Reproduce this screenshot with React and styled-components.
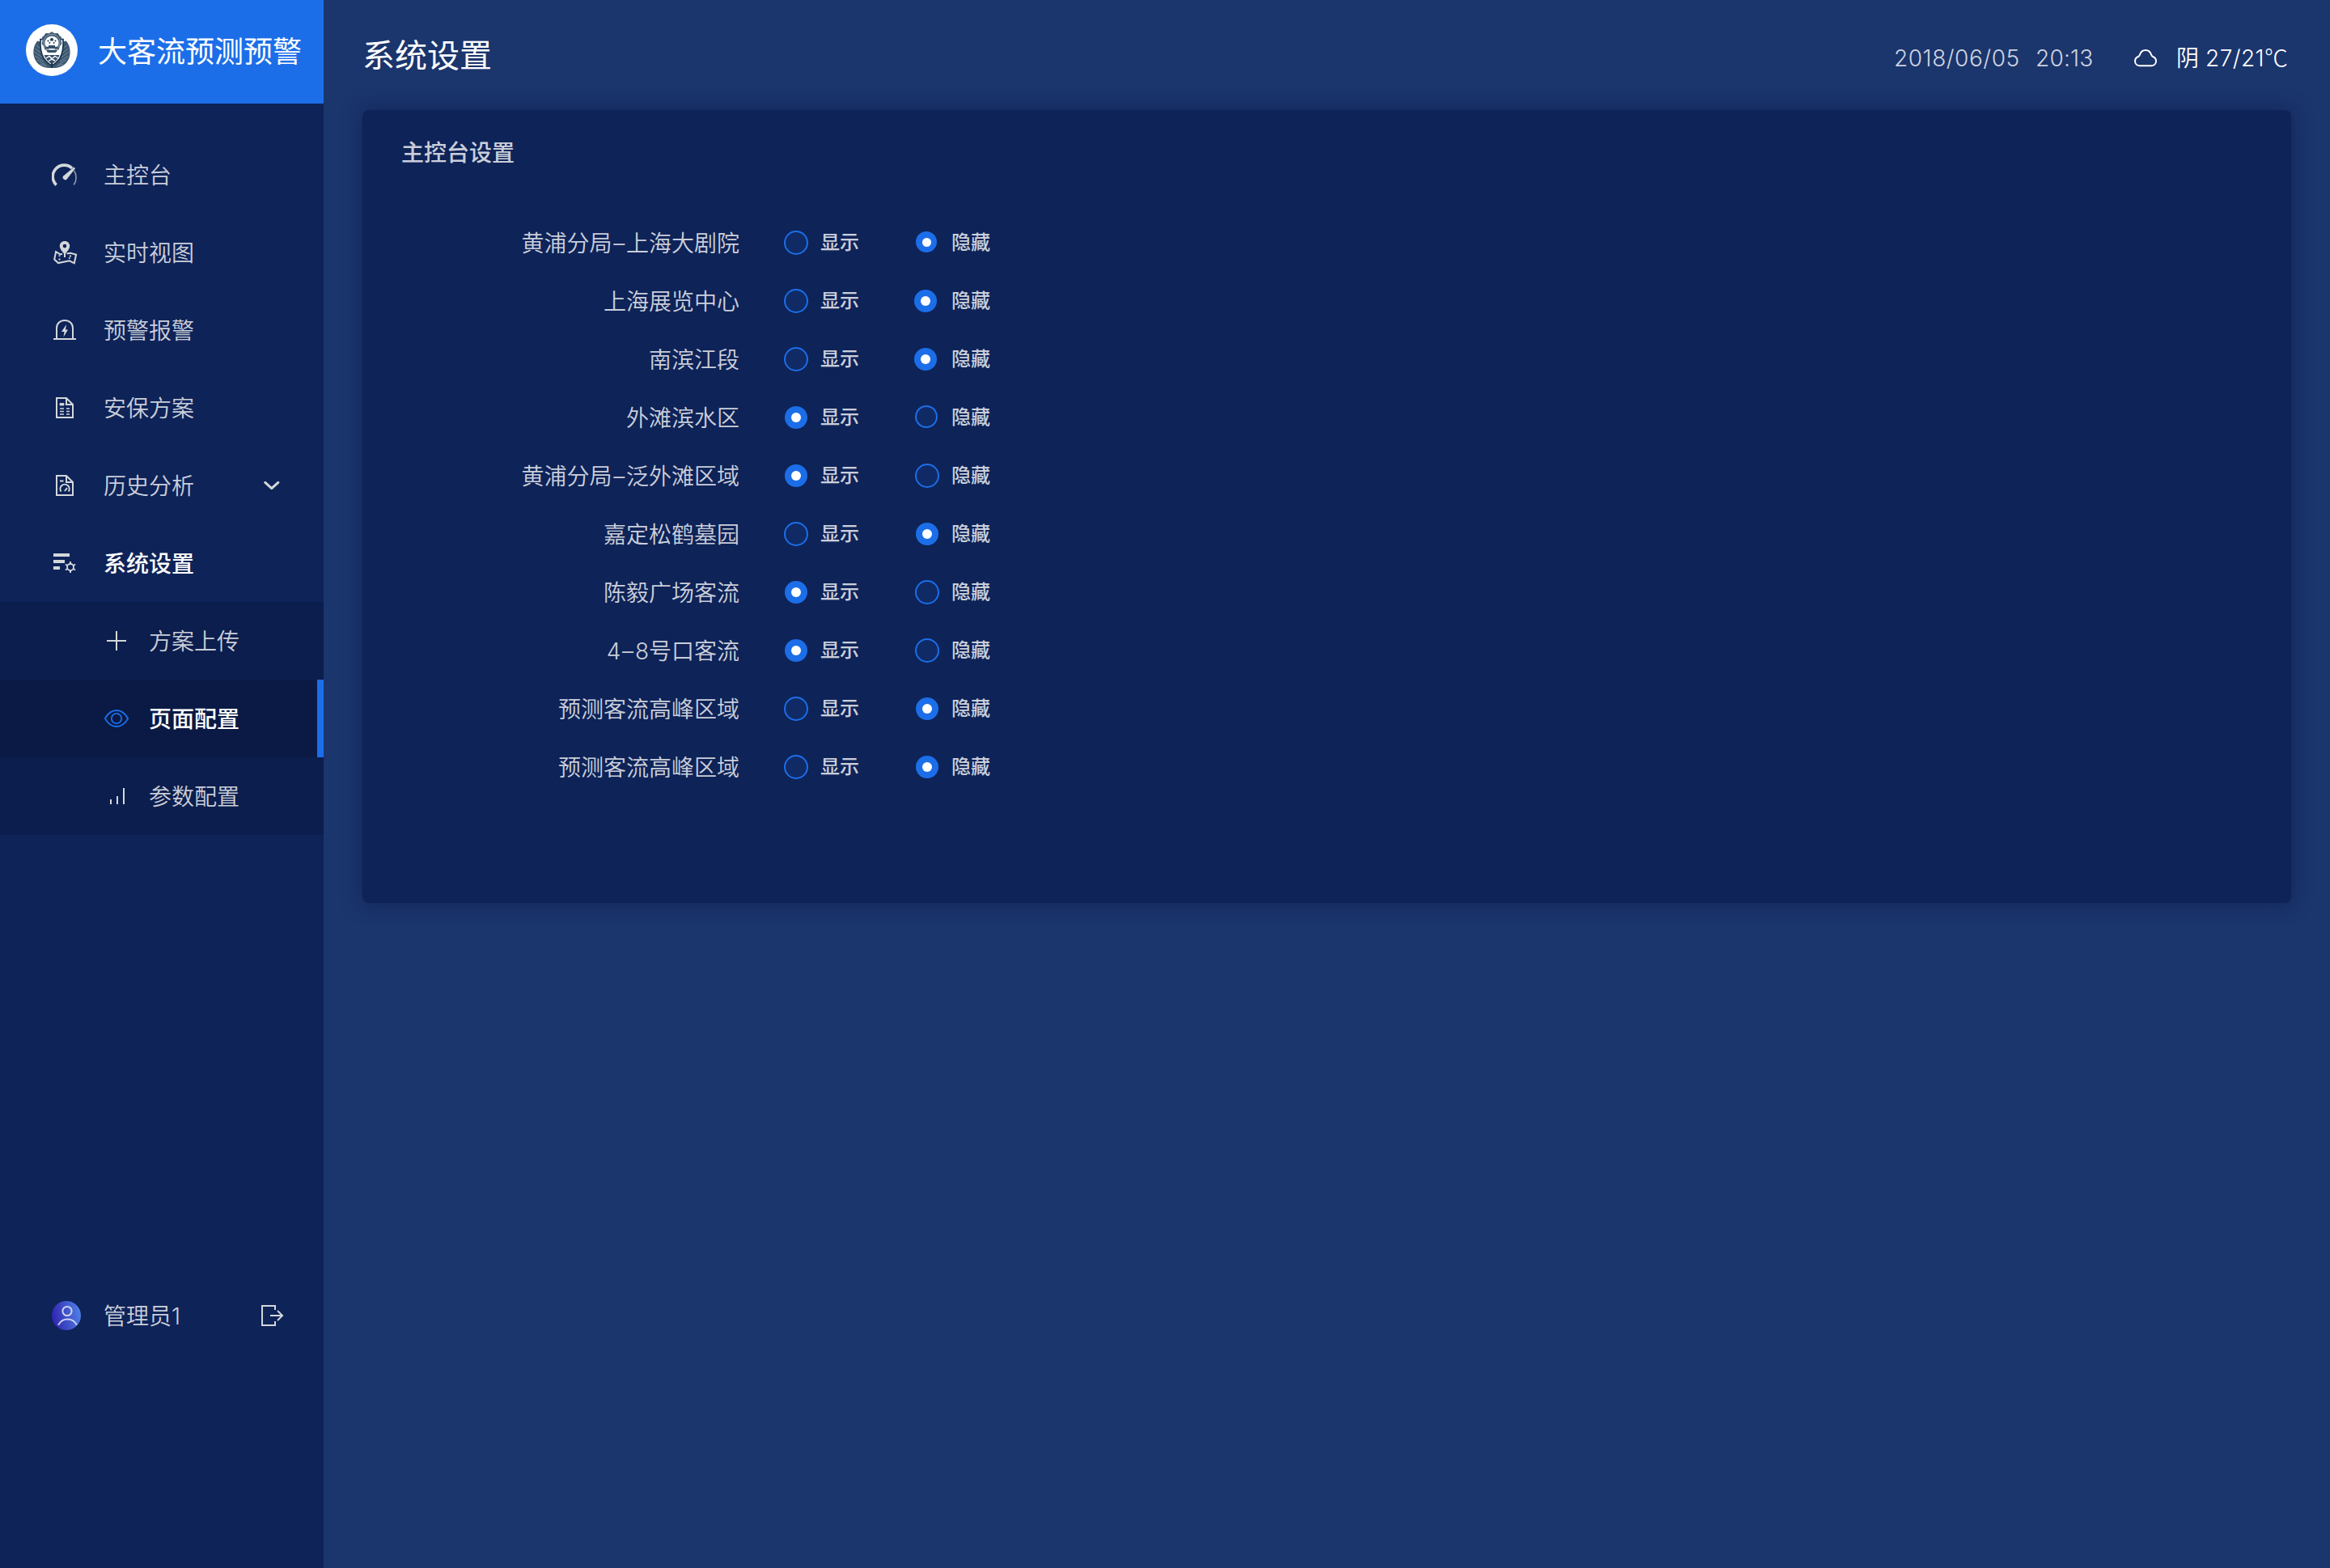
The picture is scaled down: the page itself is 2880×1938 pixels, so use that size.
import React from 'react';
import styled, { createGlobalStyle, css } from 'styled-components';

const GlobalStyle = createGlobalStyle`
  *, *::before, *::after { box-sizing: border-box; }
  html, body, #root { margin: 0; padding: 0; height: 100%; }
  body {
    background: #1b356d;
    font-family: Inter, 'Noto Sans CJK SC', sans-serif;
    overflow: hidden;
  }
  svg { display: block; flex: none; }
  h1, h2, ul { margin: 0; padding: 0; font-weight: inherit; list-style: none; }
`;

const Page = styled.div`
  display: flex;
  width: 2880px;
  height: 1938px;
  background: #1b356d;
  color: #fff;
`;

const Sidebar = styled.aside`
  display: flex;
  flex-direction: column;
  flex: none;
  width: 400px;
  background: #0e2358;
`;

const Brand = styled.div`
  display: flex;
  align-items: center;
  gap: 25px;
  height: 128px;
  padding: 0 0 4px 32px;
  background: #1c6ee8;
  font-size: 36px;
  line-height: 50px;
  white-space: nowrap;
`;

const BrandName = styled.span`
  padding-top: 3px;
`;

const Nav = styled.nav`
  padding-top: 40px;
`;

const IconSlot = styled.span`
  display: flex;
  align-items: center;
  justify-content: center;
  width: 32px;
  height: 32px;
  flex: none;
  color: ${(p) => (p.$accent ? '#1c6ee8' : '#d3d7da')};
`;

const MenuItem = styled.li`
  display: flex;
  align-items: center;
  height: 96px;
  padding-left: 64px;
  gap: 32px;
  font-size: 28px;
  line-height: 40px;
  font-weight: 350;
  color: rgba(255, 255, 255, 0.8);
  ${(p) => p.$active && css`
    color: #fff;
    font-weight: 500;
  `}
`;

const MenuLabel = styled.span`
  padding-top: 1px;
  width: ${(p) => (p.$wide ? '166px' : 'auto')};
`;

const SubMenu = styled.ul`
  background: #0c1e4d;
`;

const SubItem = styled(MenuItem)`
  padding-left: 128px;
  gap: 24px;
  ${(p) => p.$active && css`
    background: #0a1a44;
    border-right: 8px solid #1c6ee8;
  `}
`;

const UserBar = styled.div`
  display: flex;
  align-items: center;
  height: 96px;
  margin-top: 546px;
  padding-left: 64px;
  font-size: 28px;
  line-height: 40px;
  font-weight: 350;
  color: rgba(255, 255, 255, 0.8);
`;

const UserName = styled.span`
  width: 192px;
  margin-left: 28px;
  padding-top: 1px;
`;

const Main = styled.main`
  flex: 1;
  padding: 0 48px;
`;

const TopBar = styled.header`
  display: flex;
  justify-content: space-between;
  height: 136px;
`;

const Title = styled.h1`
  padding-top: 41px;
  font-size: 40px;
  line-height: 56px;
  font-weight: 400;
`;

const Status = styled.div`
  display: flex;
  align-items: center;
  height: 40px;
  margin-top: 52px;
  padding-right: 6px;
  font-size: 28px;
  line-height: 40px;
  font-weight: 300;
  white-space: pre;
`;

const DateText = styled.span`
  width: 157px;
  color: rgba(255, 255, 255, 0.8);
  margin-right: 18px;
  letter-spacing: 0.55px;
`;

const TimeText = styled(DateText)`
  width: 68px;
  margin-right: 52px;
  letter-spacing: 0.2px;
`;

const Weather = styled.span`
  display: flex;
  margin-left: 22px;
`;

const Sky = styled.span`
  width: 36px;
  font-weight: 350;
`;

const Degrees = styled.span`
  width: 73px;
  letter-spacing: 0.45px;
`;

const Unit = styled.span`
  width: 27px;
  font-family: 'Noto Sans CJK SC', sans-serif;
  font-size: 29px;
  line-height: 36px;
  margin-bottom: 4px;
`;

const Panel = styled.section`
  height: 980px;
  padding: 33px 48px 0;
  border-radius: 8px;
  background: #0e2358;
  box-shadow: 0 0 24px rgba(10, 26, 68, 0.6);
`;

const PanelTitle = styled.h2`
  font-size: 28px;
  line-height: 40px;
  font-weight: 500;
  color: rgba(255, 255, 255, 0.8);
`;

const Rows = styled.ul`
  padding-top: 55px;
`;

const Row = styled.li`
  display: flex;
  align-items: center;
  height: 72px;
`;

const RowLabel = styled.span`
  width: 418px;
  padding-top: 1px;
  text-align: right;
  font-size: 28px;
  line-height: 40px;
  font-weight: 350;
  color: rgba(255, 255, 255, 0.8);
`;

const Dash = styled.span`
  padding: 0 1.8px;
`;

const Option = styled.label`
  display: flex;
  align-items: center;
  gap: 15px;
  width: 162px;
  font-size: 24px;
  line-height: 34px;
  font-weight: 500;
  color: rgba(255, 255, 255, 0.8);
  &:first-of-type { margin-left: 55px; }
`;

const RadioSlot = styled.span`
  flex: none;
  width: 30px;
  height: 30px;
`;

const Radio = styled.span`
  display: flex;
  align-items: center;
  justify-content: center;
  width: ${(p) => p.$size}px;
  height: ${(p) => p.$size}px;
  margin-left: ${(p) => p.$left}px;
  margin-top: ${(p) => p.$top}px;
  border: 2px solid #1c6ee8;
  border-radius: 50%;
  background: ${(p) => (p.$on ? '#1c6ee8' : '#102a66')};
  ${(p) => p.$on && css`
    &::after {
      content: '';
      width: ${p.$size < 28 ? 11 : 12}px;
      height: ${p.$size < 28 ? 11 : 12}px;
      border-radius: 50%;
      background: #fff;
    }
  `}
`;

const Emblem = () => (
  <svg width="64" height="64" viewBox="0 0 64 64">
    <circle cx="32" cy="32" r="32" fill="#fff" />
    <path d="M14.500 20.500C10 25 8.300 33 10 40c2.500 9 11 15 21 14l.5-5C23 44 18 34 17.500 21.500z" fill="#3d5870" />
    <path d="M49.500 20.500C54 25 55.700 33 54 40c-2.500 9-11 15-21 14l-.5-5C41 44 46 34 46.500 21.500z" fill="#3d5870" />
    <g stroke="#8a9dae" strokeWidth="0.700" fill="none">
      <path d="M11.500 30l8 6M10.500 34l10 7M11 39l11 7M14 44l10 6M18 49l8 3M13 26l5 4" />
      <path d="M52.500 30l-8 6M53.500 34l-10 7M53 39l-11 7M50 44l-10 6M46 49l-8 3M51 26l-5 4" />
    </g>
    <path d="M18 18.500c4 .3 6-.5 8-2.500h12c2 2 4 2.800 8 2.500.5 9-1 18.500-4 23.500-2.800 4-6 7-10 9-4-2-7.200-5-10-9-3-5-4.500-14.500-4-23.500z" fill="#fff" stroke="#17344e" strokeWidth="1.700" />
    <path d="M22.500 38h19c-1.800 5-5 8.500-9.500 11-4.500-2.500-7.700-6-9.500-11z" fill="#35506a" />
    <path d="M25 42l4-2.500 3 3 4-3 4 2.500M28 45.500l4-2.500 4 2" stroke="#fff" strokeWidth="1.400" fill="none" />
    <path d="M32 9.300l3.500 1.900 4-.2 2.200 3.200 2.300 1.800-.5 4 .8 4-2.300 3.300-1.500 4.200H23.500L22 27.300 19.700 24l.8-4-.5-4 2.300-1.800 2.200-3.200 4 .2z" fill="#3d5870" />
    <circle cx="32" cy="22.500" r="10.200" fill="none" stroke="#a9b7c4" strokeWidth="0.800" />
    <circle cx="32" cy="23" r="8.600" fill="#fff" />
    <path d="M32 16l.9 1.800 1.900.2-1.400 1.300.4 1.900-1.800-1-1.800 1 .4-1.900-1.400-1.300 1.900-.2z" fill="#17344e" />
    <circle cx="27.500" cy="20.500" r="1" fill="#17344e" /><circle cx="36.500" cy="20.500" r="1" fill="#17344e" />
    <circle cx="29.300" cy="23" r=".9" fill="#17344e" /><circle cx="34.700" cy="23" r=".9" fill="#17344e" />
    <path d="M28 26h8v1.800h3.500V30h-15v-2.200H28zM25 32h14l-2 3H27z" fill="#35506a" />
    <path d="M22 36.500c3-1.500 6-1.500 10 0 4-1.500 7-1.500 10 0" stroke="#fff" strokeWidth="1.600" fill="none" />
    <path d="M31 48h2v6h-2z" fill="#17344e" />
  </svg>
);

const GaugeIcon = () => (
  <svg width="32" height="32" viewBox="0 0 32 32" fill="none">
    <path d="M5.600 28.600A13.800 13.800 0 0 1 25.200 8" stroke="currentColor" strokeWidth="3.600" />
    <path d="M27.600 11c3.400 5 3.400 12.500-.4 17.600" stroke="currentColor" strokeWidth="1.600" opacity=".65" />
    <path d="M27.600 6.600L29 8.200 18.600 21.400a2.900 2.900 0 1 1-4-4.200z" fill="currentColor" />
  </svg>
);

const MapIcon = () => (
  <svg width="32" height="32" viewBox="0 0 32 32">
    <path fill="currentColor" fillRule="evenodd" d="M16 2c3.600 0 6.200 2.700 6.200 6.100C22.200 12 18.700 15 16 19c-2.700-4-6.200-7-6.200-10.900C9.800 4.700 12.400 2 16 2zm0 3.800a2.300 2.300 0 1 0 0 4.600 2.300 2.300 0 0 0 0-4.600z" />
    <path d="M13 17.700l-2.600.7-5.300-3.200L3.200 24.600l4.800 4.500 13.800-2.800 6 3 2.300-10.600-6.800-2-4.800.8" fill="none" stroke="currentColor" strokeWidth="2" />
    <path d="M16 17v5M9.500 19.500v1.600M9.500 23.500v2M22 20.500h2M21 23.500l1.500-1" stroke="currentColor" strokeWidth="2" />
  </svg>
);

const AlarmIcon = () => (
  <svg width="32" height="32" viewBox="0 0 32 32">
    <path d="M6 26V13.500C6 8 10 4 16 4s10 4 10 9.500V26M2 27h28" fill="none" stroke="currentColor" strokeWidth="2" />
    <path d="M18 9l-6 9h3.500L14.500 24.500 20 15.500h-3z" fill="currentColor" />
  </svg>
);

const PlanIcon = () => (
  <svg width="32" height="32" viewBox="0 0 32 32" fill="none" stroke="currentColor" strokeWidth="2">
    <path d="M6 4h12l8 8v16H6zM18 4v8h8" />
    <path d="M10 12h5M18 17h4M10 17h5M10 20.500h5M18 20.500h4M10 24h5M18 24h4" strokeWidth="1.700" />
    <path d="M10 10.500h5v2.500h-5z" fill="currentColor" strokeWidth=".8" />
  </svg>
);

const HistoryIcon = () => (
  <svg width="32" height="32" viewBox="0 0 32 32" fill="none" stroke="currentColor" strokeWidth="2">
    <path d="M6 4h12l8 8v16H6zM18 4v8h8M10 10.500h4.500" />
    <path d="M11.500 23.500a5.600 5.600 0 1 1 9.200 0M16 23l3-4" />
  </svg>
);

const SettingsIcon = () => (
  <svg width="32" height="32" viewBox="0 0 32 32">
    <path d="M2 4h20v4H2zM2 12h14v4H2zM2 20h8v4H2z" fill="currentColor" />
    <g stroke="currentColor" fill="none">
      <circle cx="23" cy="21" r="4" strokeWidth="1.800" />
      <path d="M23 17v-3M23 25v3M19.500 19l-2.600-1.500M26.500 19l2.600-1.500M19.500 23l-2.600 1.500M26.500 23l2.600 1.500" strokeWidth="2" />
    </g>
  </svg>
);

const PlusIcon = () => (
  <svg width="32" height="32" viewBox="0 0 32 32">
    <path d="M4 16h24M16 4v24" stroke="currentColor" strokeWidth="2" />
  </svg>
);

const EyeIcon = () => (
  <svg width="32" height="32" viewBox="0 0 32 32" fill="none" stroke="currentColor" strokeWidth="1.800">
    <path d="M1.800 16C5.500 9.500 10 6 16 6s10.500 3.500 14.200 10C26.500 22.500 22 26 16 26S5.500 22.500 1.800 16z" strokeLinejoin="round" />
    <circle cx="16" cy="16" r="6.200" />
  </svg>
);

const BarsIcon = () => (
  <svg width="32" height="32" viewBox="0 0 32 32">
    <path d="M8 20h2v6H8zM16 16h2v10h-2zM24 6h2v20h-2z" fill="currentColor" />
  </svg>
);

const ChevronIcon = () => (
  <svg width="20" height="12" viewBox="0 0 20 12">
    <path d="M1.800 2.300l8 7.400 8-7.400" fill="none" stroke="#d3d7da" strokeWidth="3" strokeLinecap="round" strokeLinejoin="round" />
  </svg>
);

const Avatar = () => (
  <svg width="36" height="36" viewBox="0 0 36 36" fill="none">
    <defs>
      <linearGradient id="avatarFill" x1="0" y1="0.600" x2="1" y2="0.400">
        <stop offset="0" stopColor="#3023ae" />
        <stop offset="1" stopColor="#4f80e6" />
      </linearGradient>
    </defs>
    <circle cx="18" cy="18" r="18" fill="url(#avatarFill)" />
    <g stroke="#cdd3ee" strokeWidth="2">
      <circle cx="19" cy="12.500" r="5.600" />
      <path d="M8.500 29c5-8.600 17-8.600 22 0" strokeLinecap="round" />
    </g>
  </svg>
);

const LogoutIcon = () => (
  <svg width="32" height="32" viewBox="0 0 32 32" fill="none" stroke="#d3d7da" strokeWidth="2">
    <path d="M20 9V4H4v24h16v-5" />
    <path d="M14 16h15M23 10l6 6-6 6" />
  </svg>
);

const CloudIcon = () => (
  <svg width="32" height="32" viewBox="0 0 32 32" fill="none" stroke="#fff" strokeWidth="2">
    <path d="M9 25.200C5.500 25.200 3 22.700 3 19.500c0-2.500 1.500-4.500 4-5.500 1.300-.6 1.600-1.500 2-2.500C10 8.200 12.800 6 16 6s6 2.200 7 5.500c.4 1 .7 1.900 2 2.500 2.500 1 4 3 4 5.500 0 3.200-2.500 5.700-6 5.700z" strokeLinejoin="round" />
  </svg>
);

const menu = [
  { label: '主控台', Icon: GaugeIcon },
  { label: '实时视图', Icon: MapIcon },
  { label: '预警报警', Icon: AlarmIcon },
  { label: '安保方案', Icon: PlanIcon },
  { label: '历史分析', Icon: HistoryIcon, expandable: true },
  { label: '系统设置', Icon: SettingsIcon, active: true },
];

const subMenu = [
  { label: '方案上传', Icon: PlusIcon },
  { label: '页面配置', Icon: EyeIcon, active: true },
  { label: '参数配置', Icon: BarsIcon },
];

const areas = [
  { name: '黄浦分局–上海大剧院', shown: false, hideDot: { size: 26, left: 1, top: 1 } },
  { name: '上海展览中心', shown: false, hideDot: { size: 28, left: -1, top: 1 } },
  { name: '南滨江段', shown: false, hideDot: { size: 28, left: -1, top: 1 } },
  { name: '外滩滨水区', shown: true, hideDot: { size: 28, left: 0, top: 0 } },
  { name: '黄浦分局–泛外滩区域', shown: true },
  { name: '嘉定松鹤墓园', shown: false },
  { name: '陈毅广场客流', shown: true },
  { name: '4–8号口客流', shown: true },
  { name: '预测客流高峰区域', shown: false },
  { name: '预测客流高峰区域', shown: false },
];

function AreaName({ name }) {
  const [before, after] = name.split('–');
  return after === undefined ? name : <>{before}<Dash>–</Dash>{after}</>;
}

function RadioOption({ on, dot, children }) {
  const { size, left, top } = dot || (on ? { size: 28, left: 1, top: 1 } : { size: 30, left: 0, top: 0 });
  return (
    <Option>
      <RadioSlot><Radio $on={on} $size={size} $left={left} $top={top} /></RadioSlot>
      {children}
    </Option>
  );
}

export default function App() {
  return (
    <>
      <GlobalStyle />
      <Page>
        <Sidebar>
          <Brand><Emblem /><BrandName>大客流预测预警</BrandName></Brand>
          <Nav>
            <ul>
              {menu.map(({ label, Icon, active, expandable }) => (
                <MenuItem key={label} $active={active}>
                  <IconSlot><Icon /></IconSlot>
                  <MenuLabel $wide={expandable}>{label}</MenuLabel>
                  {expandable && <ChevronIcon />}
                </MenuItem>
              ))}
            </ul>
            <SubMenu>
              {subMenu.map(({ label, Icon, active }) => (
                <SubItem key={label} $active={active}>
                  <IconSlot $accent={active}><Icon /></IconSlot>
                  <MenuLabel>{label}</MenuLabel>
                </SubItem>
              ))}
            </SubMenu>
          </Nav>
          <UserBar>
            <Avatar />
            <UserName>管理员1</UserName>
            <LogoutIcon />
          </UserBar>
        </Sidebar>
        <Main>
          <TopBar>
            <Title>系统设置</Title>
            <Status>
              <DateText>2018/06/05</DateText>
              <TimeText>20:13</TimeText>
              <CloudIcon />
              <Weather><Sky>阴</Sky><Degrees>27/21</Degrees><Unit>℃</Unit></Weather>
            </Status>
          </TopBar>
          <Panel>
            <PanelTitle>主控台设置</PanelTitle>
            <Rows>
              {areas.map(({ name, shown, hideDot }, i) => (
                <Row key={i}>
                  <RowLabel><AreaName name={name} /></RowLabel>
                  <RadioOption on={shown}>显示</RadioOption>
                  <RadioOption on={!shown} dot={hideDot}>隐藏</RadioOption>
                </Row>
              ))}
            </Rows>
          </Panel>
        </Main>
      </Page>
    </>
  );
}
